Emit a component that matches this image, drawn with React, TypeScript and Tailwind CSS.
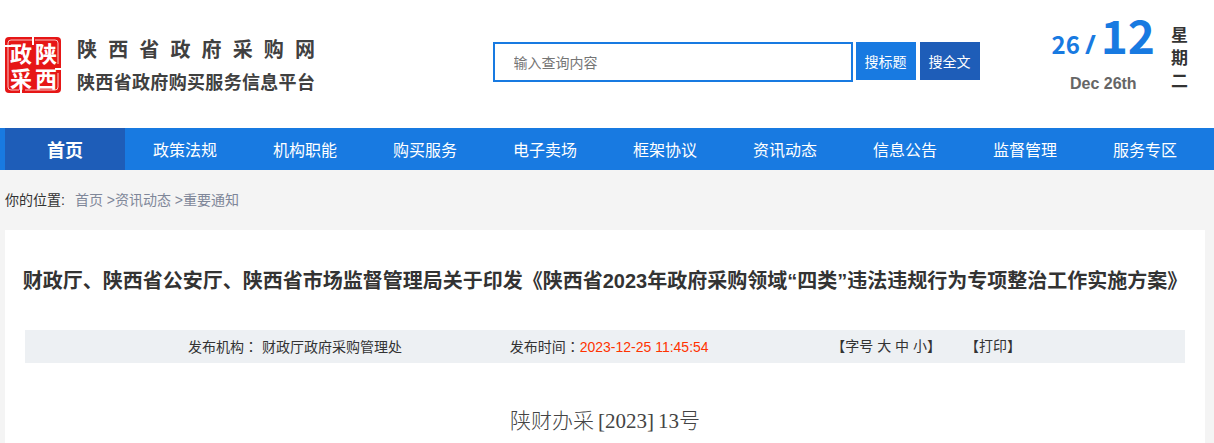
const navItems = [
  '首页',
  '政策法规',
  '机构职能',
  '购买服务',
  '电子卖场',
  '框架协议',
  '资讯动态',
  '信息公告',
  '监督管理',
  '服务专区',
];

function Seal() {
  return (
    <svg
      className="size-14 shrink-0 font-['Noto_Sans_CJK_SC',sans-serif] font-bold"
      viewBox="0 0 56 56"
      role="img"
      aria-label="陕西政采"
    >
      <rect width="56" height="56" rx="4" fill="#e61616" />
      <path
        d="M27 3H6Q3 3 3 6V50Q3 53 6 53H14M20 53H50Q53 53 53 50V36M53 27V6Q53 3 50 3H30"
        fill="none"
        stroke="#fff"
        strokeOpacity="0.75"
      />
      <g fill="#fff" fontSize="22" textAnchor="middle">
        <text x="16" y="25">政</text>
        <text x="41" y="25">陕</text>
        <text x="16" y="50">采</text>
        <text x="41" y="50">西</text>
      </g>
      <g fill="#fff">
        <rect x="0" y="8" width="9" height="2" />
        <rect x="27" y="0" width="2" height="8" />
        <rect x="50" y="31" width="6" height="2" />
        <rect x="15" y="48" width="2" height="8" />
      </g>
    </svg>
  );
}

function SpacedLine({ text }: { text: string }) {
  return (
    <span className="flex justify-between">
      {Array.from(text).map((char, i) => (
        <span key={i}>{char}</span>
      ))}
    </span>
  );
}

function Header() {
  return (
    <header className="flex h-32 items-start pr-[9px] pl-[5px]">
      <a href="#" className="mt-[35px] flex items-center gap-4 text-[#404040]">
        <Seal />
        <span className="flex w-[238px] flex-col gap-1 font-bold">
          <span className="text-[20px] leading-7">
            <SpacedLine text="陕西省政府采购网" />
          </span>
          <span className="text-[18px] leading-7">
            <SpacedLine text="陕西省政府购买服务信息平台" />
          </span>
        </span>
      </a>
      <form
        className="mt-[42px] ml-auto flex items-start gap-1 text-[14px]"
        onSubmit={(e) => e.preventDefault()}
      >
        <input
          type="text"
          aria-label="输入查询内容"
          placeholder="输入查询内容"
          className="-mr-px h-10 w-[360px] border-2 border-[#187ae1] bg-white px-[19px] outline-none placeholder:text-[#757575]"
        />
        <button type="submit" className="h-[38px] w-[60px] bg-[#187ae1] text-white">
          搜标题
        </button>
        <button type="button" className="h-[38px] w-[60px] bg-[#1e5db8] text-white">
          搜全文
        </button>
      </form>
      <div className="mt-[10px] mr-[17px] ml-[72px] flex font-bold">
        <div className="flex flex-col">
          <div className="flex items-baseline gap-[5px] leading-[48px] text-[#187ae1]">
            <span className="text-[24px]">26</span>
            <span className="font-['Noto_Sans',sans-serif] text-[26px]">/</span>
            <span className="text-[46px]">12</span>
          </div>
          <div className="mt-1 text-center font-['Liberation_Sans',sans-serif] text-[16px] leading-6 text-[#666]">
            Dec 26th
          </div>
        </div>
        <div className="mt-3 ml-4 w-[17px] text-[17px] leading-[23px] text-[#333]">星期二</div>
      </div>
    </header>
  );
}

function Nav() {
  return (
    <nav className="bg-[#187ae1] pr-[9px] pl-[5px]">
      <ul className="grid grid-cols-10">
        {navItems.map((item, i) => (
          <li key={item}>
            <a
              href="#"
              className={
                i === 0
                  ? 'block bg-[#1e5db8] text-center text-[18px] leading-[42px] font-bold text-white'
                  : 'block text-center text-[16px] leading-[42px] text-white'
              }
            >
              {item}
            </a>
          </li>
        ))}
      </ul>
    </nav>
  );
}

function Colon() {
  return <span className="font-['Noto_Sans_CJK_TC',sans-serif]">：</span>;
}

export default function App() {
  return (
    <div className="min-h-screen bg-[#f4f4f4] font-['Liberation_Sans','Noto_Sans_CJK_SC',sans-serif] text-[#333]">
      <div className="bg-white font-['Noto_Sans_CJK_SC',sans-serif]">
        <Header />
        <Nav />
      </div>
      <div className="flex h-15 items-center gap-[10px] pl-[5px] text-[14px]">
        <span>你的位置:</span>
        <nav aria-label="你的位置" className="text-[#7f8799]">
          <a href="#">首页</a> &gt;<a href="#">资讯动态</a> &gt;<a href="#">重要通知</a>
        </nav>
      </div>
      <main className="mr-[9px] ml-[5px] bg-white px-5 pb-2">
        <h1 className="flex justify-center pt-[31px] pb-[29px] text-[20px] leading-10 font-bold whitespace-nowrap">
          财政厅、陕西省公安厅、陕西省市场监督管理局关于印发《陕西省2023年政府采购领域“四类”违法违规行为专项整治工作实施方案》
        </h1>
        <div className="grid grid-cols-3 bg-[#edf0f3] text-[14px] leading-8">
          <div className="pl-[163px]">
            发布机构
            <Colon /> 财政厅政府采购管理处
          </div>
          <div className="pl-[98px]">
            发布时间
            <Colon />
            <span className="text-[#ff3300]">2023-12-25 11:45:54</span>
          </div>
          <div className="flex gap-6 pl-[33px]">
            <span>
              【字号 <a href="#">大</a> <a href="#">中</a> <a href="#">小</a>】
            </span>
            <a href="#">【打印】</a>
          </div>
        </div>
        <p className="mt-[42px] text-center font-['Liberation_Serif','Noto_Sans_CJK_SC',serif] text-[21px] leading-8 font-light text-[#444]">
          陕财办采<span className="pl-1">[</span>2023<span className="pr-1">]</span>13号
        </p>
      </main>
    </div>
  );
}
